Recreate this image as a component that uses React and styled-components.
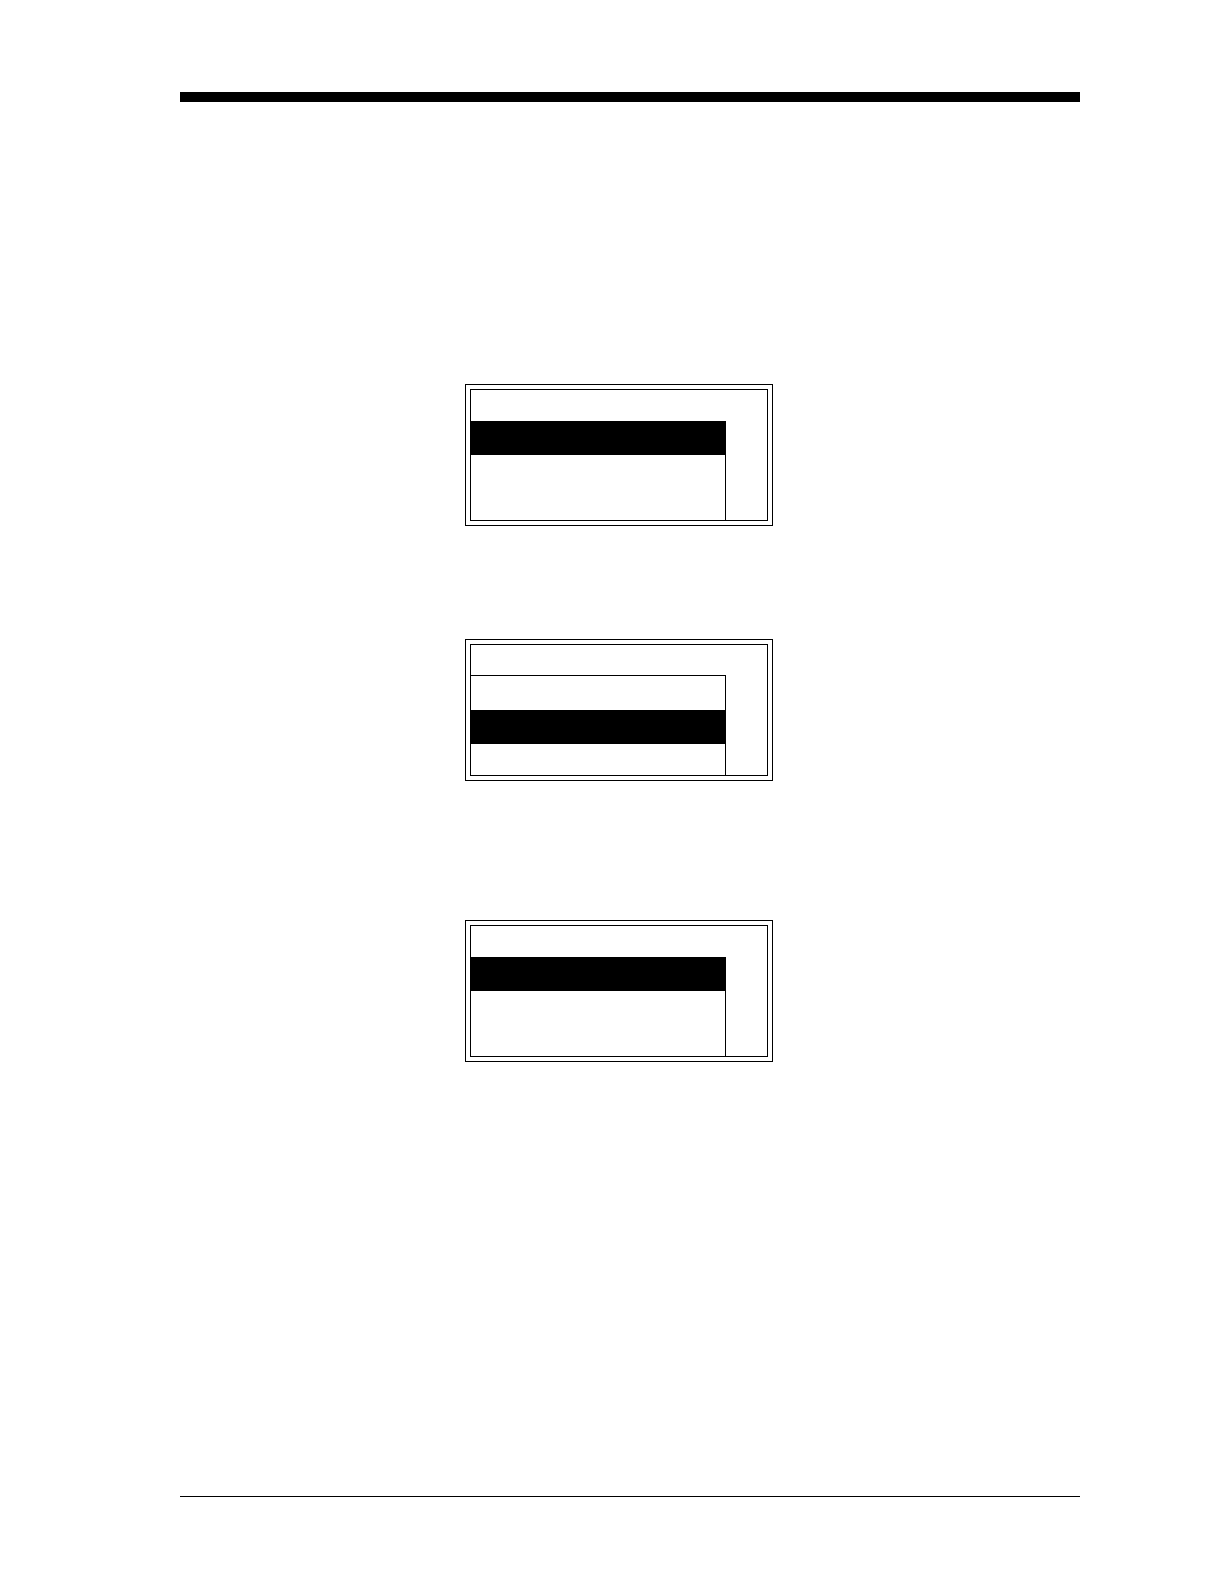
import React from 'react'
import styled, { createGlobalStyle } from 'styled-components'

const panels = [
  { id: 'first', selected: 0, space: 282 },
  { id: 'second', selected: 1, space: 113 },
  { id: 'third', selected: 0, space: 139 },
]

const rows = [0, 1, 2]

function Display({ selected, space }) {
  return (
    <Frame $space={space}>
      <Screen>
        <Menu>
          <MenuTitle $line={selected !== 0} />
          <MenuList>
            {rows.map((row) => (
              <MenuRow key={row} $selected={row === selected} />
            ))}
          </MenuList>
        </Menu>
      </Screen>
    </Frame>
  )
}

function App() {
  return (
    <>
      <GlobalStyle />
      <Page>
        <HeaderRule />
        <Content>
          {panels.map((panel) => (
            <Display key={panel.id} selected={panel.selected} space={panel.space} />
          ))}
        </Content>
        <FooterRule />
      </Page>
    </>
  )
}

// =========================================

const GlobalStyle = createGlobalStyle`
  * {
    box-sizing: border-box;
  }
  body {
    margin: 0;
    background: #fff;
  }
`

const Page = styled.div`
  display: flex;
  flex-direction: column;
  min-height: 100vh;
  padding: 92px 144px 87px 180px;
`

const HeaderRule = styled.header`
  height: 10px;
  background: #000;
`

const Content = styled.main`
  flex: 1;
  display: flex;
  flex-direction: column;
  align-items: center;
  padding-right: 22px;
`

const FooterRule = styled.footer`
  border-top: 1px solid #000;
`

/* double outline around each display */
const Frame = styled.section`
  width: 308px;
  max-width: 100%;
  margin-top: ${({ $space }) => $space}px;
  padding: 4px;
  border: 1px solid #000;
`

const Screen = styled.div`
  padding-right: 41px;
  border: 1px solid #000;
`

const Menu = styled.div`
  display: flex;
  flex-direction: column;
`

/* the line is left out when the first row is the selected one */
const MenuTitle = styled.div`
  height: 31px;
  border-bottom: 1px solid ${({ $line }) => ($line ? '#000' : 'transparent')};
`

const MenuList = styled.ul`
  height: 99px;
  margin: 0;
  padding: 0;
  overflow: hidden;
  list-style: none;
  border-right: 1px solid #000;
`

const MenuRow = styled.li`
  height: 34px;
  background: ${({ $selected }) => ($selected ? '#000' : '#fff')};
`

export default App
